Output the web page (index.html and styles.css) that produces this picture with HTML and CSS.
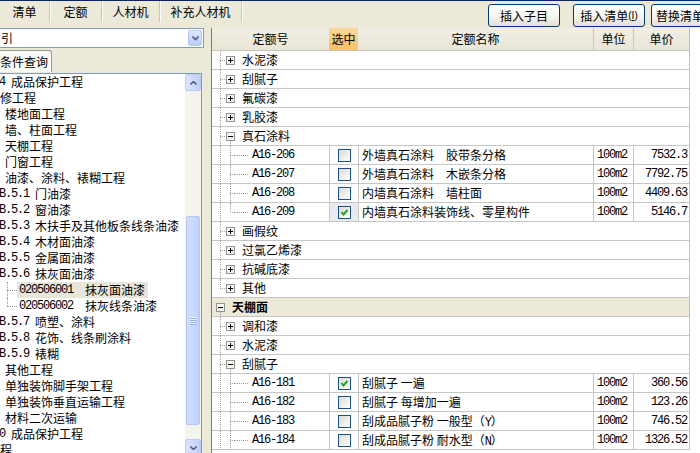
FILE: index.html
```html
<!DOCTYPE html>
<html lang="zh-CN">
<head>
<meta charset="utf-8">
<title>定额</title>
<link rel="stylesheet" href="styles.css">
</head>
<body>
<svg class="defs" width="0" height="0">
  <symbol id="plus" viewBox="0 0 9 9"><rect x="0.5" y="0.5" width="8" height="8" fill="#f6f5f0" stroke="#8f9591"/><path d="M2 4.5h5M4.5 2v5" stroke="#000"/></symbol>
  <symbol id="minus" viewBox="0 0 9 9"><rect x="0.5" y="0.5" width="8" height="8" fill="#f6f5f0" stroke="#8f9591"/><path d="M2 4.5h5" stroke="#000"/></symbol>
  <symbol id="check" viewBox="0 0 11 11"><path d="M2.5 5 L4.5 7.5 L8.5 3" fill="none" stroke="#21a121" stroke-width="2"/></symbol>
</svg>

<div class="topbar">
  <div class="tabs">
    <div class="tab w50">清单</div>
    <div class="tab w52">定额</div>
    <div class="tab w58">人材机</div>
    <div class="tab w82">补充人材机</div>
  </div>
  <div class="actions">
    <div class="btn gap13">插入子目</div>
    <div class="btn gap6">插入清单<span class="acc">(<u>I</u>)</span></div>
    <div class="btn">替换清单<span class="acc">(<u>R</u>)</span></div>
  </div>
</div>

<div class="main">
  <div class="left">
    <div class="combo">
      <span class="combo-text">引</span>
      <span class="combo-btn"><svg width="7" height="5" viewBox="0 0 7 5"><path d="M0.5 0.5 L3.5 3.5 L6.5 0.5" fill="none" stroke="#4d6185" stroke-width="1.6"/></svg></span>
    </div>
    <div class="qtab">条件查询</div>
    <div class="tree">
      <div class="tree-list">
        <div class="ti im1"><span class="m">4 </span>成品保护工程</div>
        <div class="ti">修工程</div>
        <div class="ti i5">楼地面工程</div>
        <div class="ti i5">墙、柱面工程</div>
        <div class="ti i5">天棚工程</div>
        <div class="ti i5">门窗工程</div>
        <div class="ti i5">油漆、涂料、裱糊工程</div>
        <div class="ti im1"><span class="m">B.5.1 </span>门油漆</div>
        <div class="ti im1"><span class="m">B.5.2 </span>窗油漆</div>
        <div class="ti im1"><span class="m">B.5.3 </span>木扶手及其他板条线条油漆</div>
        <div class="ti im1"><span class="m">B.5.4 </span>木材面油漆</div>
        <div class="ti im1"><span class="m">B.5.5 </span>金属面油漆</div>
        <div class="ti im1"><span class="m">B.5.6 </span>抹灰面油漆</div>
        <div class="ti code"><span class="br t"></span><span class="lbl sel"><span class="m">020506001  </span>抹灰面油漆</span></div>
        <div class="ti code"><span class="br e"></span><span class="lbl"><span class="m">020506002  </span>抹灰线条油漆</span></div>
        <div class="ti im1"><span class="m">B.5.7 </span>喷塑、涂料</div>
        <div class="ti im1"><span class="m">B.5.8 </span>花饰、线条刷涂料</div>
        <div class="ti im1"><span class="m">B.5.9 </span>裱糊</div>
        <div class="ti i5">其他工程</div>
        <div class="ti i5">单独装饰脚手架工程</div>
        <div class="ti i5">单独装饰垂直运输工程</div>
        <div class="ti i5">材料二次运输</div>
        <div class="ti im1"><span class="m">0 </span>成品保护工程</div>
        <div class="ti">程</div>
      </div>
      <div class="vscroll">
        <div class="sb-btn"><svg width="7" height="4" viewBox="0 0 7 4"><path d="M0.5 3.5 L3.5 0.5 L6.5 3.5" fill="none" stroke="#4d6185" stroke-width="1.6"/></svg></div>
        <div class="track"><div class="thumb"><span class="grip"></span></div></div>
        <div class="sb-btn"><svg width="7" height="4" viewBox="0 0 7 4"><path d="M0.5 0.5 L3.5 3.5 L6.5 0.5" fill="none" stroke="#4d6185" stroke-width="1.6"/></svg></div>
      </div>
    </div>
  </div>

  <div class="right">
    <div class="thead">
      <div class="th">定额号</div>
      <div class="th sel">选中</div>
      <div class="th">定额名称</div>
      <div class="th sep">单位</div>
      <div class="th sep">单价</div>
    </div>

    <div class="tr"><div class="tc"><span class="ind t"></span><span class="ind bx"><svg class="pm"><use href="#plus"/></svg></span><span class="txt">水泥漆</span></div></div>
    <div class="tr"><div class="tc"><span class="ind t"></span><span class="ind bx"><svg class="pm"><use href="#plus"/></svg></span><span class="txt">刮腻子</span></div></div>
    <div class="tr"><div class="tc"><span class="ind t"></span><span class="ind bx"><svg class="pm"><use href="#plus"/></svg></span><span class="txt">氟碳漆</span></div></div>
    <div class="tr"><div class="tc"><span class="ind t"></span><span class="ind bx"><svg class="pm"><use href="#plus"/></svg></span><span class="txt">乳胶漆</span></div></div>
    <div class="tr"><div class="tc"><span class="ind t"></span><span class="ind bx open"><svg class="pm"><use href="#minus"/></svg></span><span class="txt">真石涂料</span></div></div>

    <div class="tr det">
      <div class="tc"><span class="ind v"></span><span class="ind t"></span><span class="ind h"></span><span class="txt m">A16-206</span></div>
      <div class="cc"><span class="cb"></span></div>
      <div class="nc">外墙真石涂料　胶带条分格</div>
      <div class="uc m">100m2</div>
      <div class="pc m">7532.3</div>
    </div>
    <div class="tr det">
      <div class="tc"><span class="ind v"></span><span class="ind t"></span><span class="ind h"></span><span class="txt m">A16-207</span></div>
      <div class="cc"><span class="cb"></span></div>
      <div class="nc">外墙真石涂料　木嵌条分格</div>
      <div class="uc m">100m2</div>
      <div class="pc m">7792.75</div>
    </div>
    <div class="tr det">
      <div class="tc"><span class="ind v"></span><span class="ind t"></span><span class="ind h"></span><span class="txt m">A16-208</span></div>
      <div class="cc"><span class="cb"></span></div>
      <div class="nc">内墙真石涂料　墙柱面</div>
      <div class="uc m">100m2</div>
      <div class="pc m">4409.63</div>
    </div>
    <div class="tr det">
      <div class="tc"><span class="ind v"></span><span class="ind e"></span><span class="ind h"></span><span class="txt m">A16-209</span></div>
      <div class="cc focus"><span class="cb"><svg class="ck"><use href="#check"/></svg></span></div>
      <div class="nc">内墙真石涂料装饰线、零星构件</div>
      <div class="uc m">100m2</div>
      <div class="pc m">5146.7</div>
    </div>

    <div class="tr"><div class="tc"><span class="ind t"></span><span class="ind bx"><svg class="pm"><use href="#plus"/></svg></span><span class="txt">画假纹</span></div></div>
    <div class="tr"><div class="tc"><span class="ind t"></span><span class="ind bx"><svg class="pm"><use href="#plus"/></svg></span><span class="txt">过氯乙烯漆</span></div></div>
    <div class="tr"><div class="tc"><span class="ind t"></span><span class="ind bx"><svg class="pm"><use href="#plus"/></svg></span><span class="txt">抗碱底漆</span></div></div>
    <div class="tr"><div class="tc"><span class="ind e"></span><span class="ind bx"><svg class="pm"><use href="#plus"/></svg></span><span class="txt">其他</span></div></div>

    <div class="tr g0"><div class="tc"><span class="ind bx open root"><svg class="pm"><use href="#minus"/></svg></span><span class="txt b">天棚面</span></div></div>

    <div class="tr"><div class="tc"><span class="ind t"></span><span class="ind bx"><svg class="pm"><use href="#plus"/></svg></span><span class="txt">调和漆</span></div></div>
    <div class="tr"><div class="tc"><span class="ind t"></span><span class="ind bx"><svg class="pm"><use href="#plus"/></svg></span><span class="txt">水泥漆</span></div></div>
    <div class="tr"><div class="tc"><span class="ind t"></span><span class="ind bx open"><svg class="pm"><use href="#minus"/></svg></span><span class="txt">刮腻子</span></div></div>

    <div class="tr det">
      <div class="tc"><span class="ind v"></span><span class="ind t"></span><span class="ind h"></span><span class="txt m">A16-181</span></div>
      <div class="cc"><span class="cb"><svg class="ck"><use href="#check"/></svg></span></div>
      <div class="nc">刮腻子 一遍</div>
      <div class="uc m">100m2</div>
      <div class="pc m">360.56</div>
    </div>
    <div class="tr det">
      <div class="tc"><span class="ind v"></span><span class="ind t"></span><span class="ind h"></span><span class="txt m">A16-182</span></div>
      <div class="cc"><span class="cb"></span></div>
      <div class="nc">刮腻子 每增加一遍</div>
      <div class="uc m">100m2</div>
      <div class="pc m">123.26</div>
    </div>
    <div class="tr det">
      <div class="tc"><span class="ind v"></span><span class="ind t"></span><span class="ind h"></span><span class="txt m">A16-183</span></div>
      <div class="cc"><span class="cb"></span></div>
      <div class="nc">刮成品腻子粉 一般型（<span class="m">Y</span>）</div>
      <div class="uc m">100m2</div>
      <div class="pc m">746.52</div>
    </div>
    <div class="tr det">
      <div class="tc"><span class="ind v"></span><span class="ind t"></span><span class="ind h"></span><span class="txt m">A16-184</span></div>
      <div class="cc"><span class="cb"></span></div>
      <div class="nc">刮成品腻子粉 耐水型（<span class="m">N</span>）</div>
      <div class="uc m">100m2</div>
      <div class="pc m">1326.52</div>
    </div>
  </div>
</div>
</body>
</html>
```

FILE: styles.css
```css
* { box-sizing: border-box; }

html, body {
  margin: 0;
  padding: 0;
}

body {
  width: 700px;
  height: 453px;
  overflow: hidden;
  background: #ece9d8;
  color: #000;
  font-family: "Noto Sans CJK SC", "Noto Sans", sans-serif;
  font-size: 12px;
  line-height: 16px;
}

.defs { position: absolute; width: 0; height: 0; overflow: hidden; }

.m {
  font-family: "Liberation Mono", "DejaVu Sans Mono", monospace;
  font-size: 12px;
  letter-spacing: -1.2px;
  white-space: pre;
}

/* ---------- top bar ---------- */
.topbar {
  display: flex;
  height: 28px;
  border-top: 1px solid #0a246a;
  flex-shrink: 0;
}

.tabs {
  display: flex;
  height: 22px;
  flex-shrink: 0;
}

.tab {
  display: flex;
  align-items: center;
  justify-content: center;
  height: 21px;
  border-right: 1px solid #c9c6b6;
  box-shadow: 1px 0 0 #fbfaf5;
  font-size: 12px;
}
.w50 { width: 50px; }
.w52 { width: 52px; }
.w58 { width: 58px; }
.w82 { width: 82px; }

.actions {
  display: flex;
  margin-left: 246px;
  padding-top: 3px;
  flex-shrink: 0;
}

.btn {
  width: 72px;
  height: 23px;
  flex-shrink: 0;
  display: flex;
  align-items: center;
  justify-content: center;
  border: 1px solid #003c74;
  border-radius: 3px;
  background: linear-gradient(#ffffff, #f5f4ee 55%, #e2e0d5);
  font-size: 12px;
  white-space: nowrap;
}
.gap13 { margin-right: 13px; }
.gap6 { margin-right: 6px; }
.acc {
  font-family: "Liberation Sans", sans-serif;
  font-size: 10px;
}

/* ---------- layout ---------- */
.main {
  display: flex;
  height: 425px;
}

.left {
  width: 210px;
  flex-shrink: 0;
  display: flex;
  flex-direction: column;
}

.combo {
  flex-shrink: 0;
  margin-left: -1px;
  width: 205px;
  height: 20px;
  border: 1px solid #7f9db9;
  background: #fff;
  display: flex;
  align-items: center;
  justify-content: space-between;
}
.combo-text { padding-left: 1px; }
.combo-btn {
  width: 14px;
  height: 16px;
  margin-right: 1px;
  border: 1px solid #b6c8f3;
  border-radius: 2px;
  background: linear-gradient(#dde7fd, #bccdf7);
  display: flex;
  align-items: center;
  justify-content: center;
}

.qtab {
  flex-shrink: 0;
  margin-top: 2px;
  width: 52px;
  height: 22px;
  border: 1px solid #919b9c;
  border-left: none;
  border-bottom: none;
  border-radius: 0 3px 0 0;
  background: #f9f8f3;
  display: flex;
  align-items: center;
  justify-content: flex-end;
  padding-right: 3px;
  white-space: nowrap;
  overflow: hidden;
}

.tree {
  margin-top: 1px;
  margin-left: -1px;
  width: 203px;
  height: 384px;
  border: 1px solid #7f9db9;
  background: #fff;
  display: flex;
  flex-shrink: 0;
}

.tree-list {
  width: 186px;
  overflow: hidden;
}

.ti {
  height: 16px;
  line-height: 16px;
  white-space: nowrap;
  display: flex;
  align-items: center;
}
.i5 { padding-left: 5px; }
.im1 { margin-left: -1px; }

.br {
  position: relative;
  width: 17px;
  height: 16px;
  flex-shrink: 0;
}
.br::before {
  content: "";
  position: absolute;
  left: 7px;
  top: 0;
  bottom: 0;
  border-left: 1px dotted #a0a0a0;
}
.br.e::before { bottom: 8px; }
.br::after {
  content: "";
  position: absolute;
  left: 7px;
  right: 0;
  top: 8px;
  border-top: 1px dotted #a0a0a0;
}

.lbl {
  width: 131px;
  height: 16px;
  padding-left: 2px;
  display: flex;
  align-items: center;
}
.lbl.sel { background: #e8e6da; }

.vscroll {
  width: 16px;
  display: flex;
  flex-direction: column;
  background: #f4f3ee;
  flex-shrink: 0;
}

.sb-btn {
  height: 17px;
  flex-shrink: 0;
  border: 1px solid #b8caf5;
  border-radius: 2px;
  background: linear-gradient(90deg, #dbe5fd, #bfd0f8);
  display: flex;
  align-items: center;
  justify-content: center;
}

.track {
  flex: 1;
  display: flex;
  flex-direction: column;
  align-items: center;
}

.thumb {
  margin-top: 125px;
  width: 14px;
  height: 209px;
  flex-shrink: 0;
  border: 1px solid #b2c6f4;
  border-radius: 2px;
  background: linear-gradient(90deg, #d3dffd, #c0d1fa);
  display: flex;
  align-items: center;
  justify-content: center;
}
.grip {
  width: 7px;
  height: 8px;
  background: repeating-linear-gradient(#eef4fe 0 1px, #8cb0f8 1px 2px);
}

/* ---------- right table ---------- */
.right {
  flex: 1;
  margin-left: 1px;
  border-left: 1px solid #7a7a7a;
  background: #fff;
  display: flex;
  flex-direction: column;
}

.thead {
  display: grid;
  grid-template-columns: 117px 29px 235px 40px 56px;
  width: 478px;
  height: 23px;
  flex-shrink: 0;
  border-bottom: 1px solid #c8c6b6;
  border-right: 1px solid #c0c0c0;
  background: linear-gradient(#f1efe4, #e9e6d7);
}

.th {
  display: flex;
  align-items: center;
  justify-content: center;
  height: 22px;
}
.th.sel { background: linear-gradient(#fbd79c, #f6c16a); }
.th.sep { border-left: 1px solid #c8c5b4; }

.tr {
  width: 478px;
  height: 19px;
  flex-shrink: 0;
  border-bottom: 1px solid #c6c6c6;
  border-right: 1px solid #c0c0c0;
  display: flex;
}
.tr.g0 { background: #ece9d8; }
.tr.det {
  display: grid;
  grid-template-columns: 117px 29px 235px 40px 56px;
}

.tc {
  display: flex;
  align-items: flex-start;
  padding-left: 3px;
  height: 18px;
}

.ind {
  position: relative;
  width: 10px;
  height: 19px;
  flex-shrink: 0;
}
.ind.v::before,
.ind.t::before,
.ind.e::before {
  content: "";
  position: absolute;
  left: 5px;
  top: 0;
  bottom: 0;
  border-left: 1px dotted #a0a0a0;
}
.ind.e::before { bottom: auto; height: 10px; }
.ind.t::after,
.ind.e::after {
  content: "";
  position: absolute;
  left: 5px;
  right: 0;
  top: 9px;
  border-top: 1px dotted #a0a0a0;
}
.ind.h::after {
  content: "";
  position: absolute;
  left: 0;
  right: -3px;
  top: 9px;
  border-top: 1px dotted #a0a0a0;
}
.ind.bx.open::after {
  content: "";
  position: absolute;
  left: 5px;
  top: 14px;
  bottom: 0;
  border-left: 1px dotted #a0a0a0;
}

.pm {
  display: block;
  width: 9px;
  height: 9px;
  margin: 5px 0 0 1px;
  shape-rendering: crispEdges;
}

.txt {
  margin-left: 7px;
  line-height: 18px;
  white-space: nowrap;
}
.txt.b { font-weight: 700; }

.cc {
  border-left: 1px solid #c6c6c6;
  display: flex;
  align-items: center;
  justify-content: center;
}
.cc.focus { background: #e8ebf1; }

.cb {
  width: 13px;
  height: 13px;
  border: 1px solid #1c5180;
  background: linear-gradient(135deg, #dcdcd5, #f4f4f1 70%, #fff);
  display: flex;
  align-items: center;
  justify-content: center;
}
.ck { width: 11px; height: 11px; display: block; }

.nc {
  border-left: 1px solid #c6c6c6;
  padding-left: 3px;
  line-height: 18px;
  white-space: nowrap;
  overflow: hidden;
}

.uc {
  border-left: 1px solid #c6c6c6;
  padding-left: 3px;
  line-height: 18px;
}

.pc {
  border-left: 1px solid #c6c6c6;
  padding-right: 2px;
  text-align: right;
  line-height: 18px;
}
```
